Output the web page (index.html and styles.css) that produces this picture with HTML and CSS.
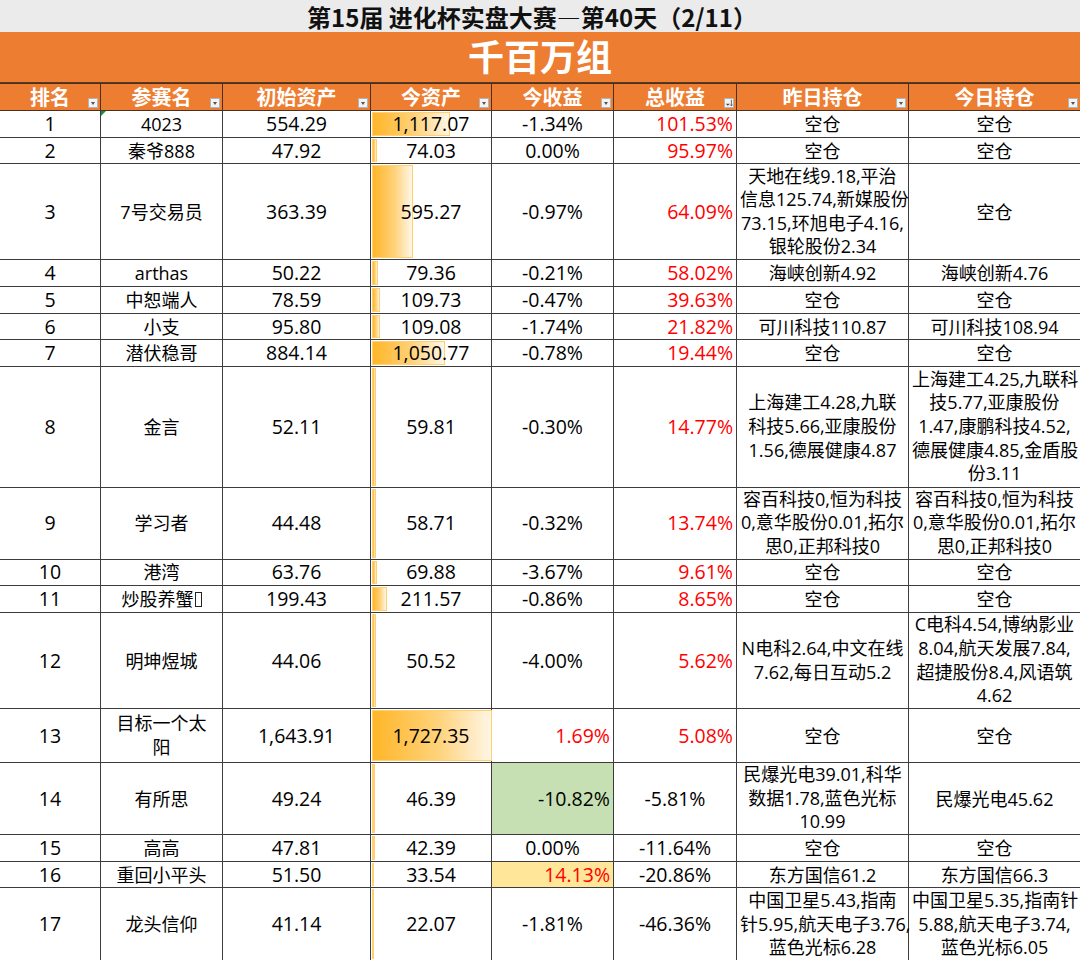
FILE: index.html
```html
<!DOCTYPE html>
<html lang="zh-CN">
<head>
<meta charset="utf-8">
<title>第15届 进化杯实盘大赛</title>
<link rel="stylesheet" href="styles.css">
</head>
<body>
<div class="title">第15届 进化杯实盘大赛—第40天（2/11）</div>
<div class="group">千百万组</div>
<table class="board">
  <colgroup>
    <col class="c-rank"><col class="c-name"><col class="c-init"><col class="c-now"><col class="c-day"><col class="c-total"><col class="c-hold"><col class="c-hold2">
  </colgroup>
  <thead>
    <tr>
      <th>排名<span class="filter"></span></th>
      <th>参赛名<span class="filter"></span></th>
      <th>初始资产<span class="filter"></span></th>
      <th>今资产<span class="filter"></span></th>
      <th>今收益<span class="filter"></span></th>
      <th>总收益<span class="filter sort"><svg viewBox="0 0 10 10" width="8" height="8"><path d="M1 6 L3.5 8.5 L6 6 Z" fill="#444"/><path d="M8 1 V8.5 M6.6 7 L8 8.6 L9.4 7" stroke="#444" stroke-width="1" fill="none"/></svg></span></th>
      <th>昨日持仓<span class="filter"></span></th>
      <th>今日持仓<span class="filter"></span></th>
    </tr>
  </thead>
  <tbody>
    <tr class="one">
      <td>1</td><td class="flag">4023</td><td>554.29</td>
      <td class="asset"><div class="bar" style="width:64.67%"></div><span class="val">1,117.07</span></td>
      <td>-1.34%</td><td class="up">101.53%</td><td>空仓</td><td>空仓</td>
    </tr>
    <tr class="one">
      <td>2</td><td>秦爷888</td><td>47.92</td>
      <td class="asset"><div class="bar" style="width:4.29%"></div><span class="val">74.03</span></td>
      <td>0.00%</td><td class="up">95.97%</td><td>空仓</td><td>空仓</td>
    </tr>
    <tr class="four">
      <td>3</td><td>7号交易员</td><td>363.39</td>
      <td class="asset"><div class="bar" style="width:34.46%"></div><span class="val">595.27</span></td>
      <td>-0.97%</td><td class="up">64.09%</td>
      <td class="hold">天地在线9.18,平治<br>信息125.74,新媒股份<br>73.15,环旭电子4.16,<br>银轮股份2.34</td>
      <td>空仓</td>
    </tr>
    <tr class="one">
      <td>4</td><td>arthas</td><td>50.22</td>
      <td class="asset"><div class="bar" style="width:4.59%"></div><span class="val">79.36</span></td>
      <td>-0.21%</td><td class="up">58.02%</td><td>海峡创新4.92</td><td>海峡创新4.76</td>
    </tr>
    <tr class="one">
      <td>5</td><td>中恕端人</td><td>78.59</td>
      <td class="asset"><div class="bar" style="width:6.35%"></div><span class="val">109.73</span></td>
      <td>-0.47%</td><td class="up">39.63%</td><td>空仓</td><td>空仓</td>
    </tr>
    <tr class="one">
      <td>6</td><td>小支</td><td>95.80</td>
      <td class="asset"><div class="bar" style="width:6.31%"></div><span class="val">109.08</span></td>
      <td>-1.74%</td><td class="up">21.82%</td><td>可川科技110.87</td><td>可川科技108.94</td>
    </tr>
    <tr class="one">
      <td>7</td><td>潜伏稳哥</td><td>884.14</td>
      <td class="asset"><div class="bar" style="width:60.83%"></div><span class="val">1,050.77</span></td>
      <td>-0.78%</td><td class="up">19.44%</td><td>空仓</td><td>空仓</td>
    </tr>
    <tr class="five">
      <td>8</td><td>金言</td><td>52.11</td>
      <td class="asset"><div class="bar" style="width:3.46%"></div><span class="val">59.81</span></td>
      <td>-0.30%</td><td class="up">14.77%</td>
      <td class="hold">上海建工4.28,九联<br>科技5.66,亚康股份<br>1.56,德展健康4.87</td>
      <td class="hold">上海建工4.25,九联科<br>技5.77,亚康股份<br>1.47,康鹏科技4.52,<br>德展健康4.85,金盾股<br>份3.11</td>
    </tr>
    <tr class="three">
      <td>9</td><td>学习者</td><td>44.48</td>
      <td class="asset"><div class="bar" style="width:3.40%"></div><span class="val">58.71</span></td>
      <td>-0.32%</td><td class="up">13.74%</td>
      <td class="hold">容百科技0,恒为科技<br>0,意华股份0.01,拓尔<br>思0,正邦科技0</td>
      <td class="hold">容百科技0,恒为科技<br>0,意华股份0.01,拓尔<br>思0,正邦科技0</td>
    </tr>
    <tr class="one">
      <td>10</td><td>港湾</td><td>63.76</td>
      <td class="asset"><div class="bar" style="width:4.05%"></div><span class="val">69.88</span></td>
      <td>-3.67%</td><td class="up">9.61%</td><td>空仓</td><td>空仓</td>
    </tr>
    <tr class="one">
      <td>11</td><td>炒股养蟹<span class="tofu"></span></td><td>199.43</td>
      <td class="asset"><div class="bar" style="width:12.25%"></div><span class="val">211.57</span></td>
      <td>-0.86%</td><td class="up">8.65%</td><td>空仓</td><td>空仓</td>
    </tr>
    <tr class="four">
      <td>12</td><td>明坤煜城</td><td>44.06</td>
      <td class="asset"><div class="bar" style="width:2.92%"></div><span class="val">50.52</span></td>
      <td>-4.00%</td><td class="up">5.62%</td>
      <td class="hold">N电科2.64,中文在线<br>7.62,每日互动5.2</td>
      <td class="hold">C电科4.54,博纳影业<br>8.04,航天发展7.84,<br>超捷股份8.4,风语筑<br>4.62</td>
    </tr>
    <tr class="two">
      <td>13</td><td class="hold">目标一个太<br>阳</td><td>1,643.91</td>
      <td class="asset"><div class="bar" style="width:100%"></div><span class="val">1,727.35</span></td>
      <td class="up">1.69%</td><td class="up">5.08%</td><td>空仓</td><td>空仓</td>
    </tr>
    <tr class="three">
      <td>14</td><td>有所思</td><td>49.24</td>
      <td class="asset"><div class="bar" style="width:2.69%"></div><span class="val">46.39</span></td>
      <td class="right green">-10.82%</td><td>-5.81%</td>
      <td class="hold">民爆光电39.01,科华<br>数据1.78,蓝色光标<br>10.99</td>
      <td>民爆光电45.62</td>
    </tr>
    <tr class="one">
      <td>15</td><td>高高</td><td>47.81</td>
      <td class="asset"><div class="bar" style="width:2.45%"></div><span class="val">42.39</span></td>
      <td>0.00%</td><td>-11.64%</td><td>空仓</td><td>空仓</td>
    </tr>
    <tr class="one">
      <td>16</td><td>重回小平头</td><td>51.50</td>
      <td class="asset"><div class="bar" style="width:1.94%"></div><span class="val">33.54</span></td>
      <td class="up yellow">14.13%</td><td>-20.86%</td><td>东方国信61.2</td><td>东方国信66.3</td>
    </tr>
    <tr class="three last">
      <td>17</td><td>龙头信仰</td><td>41.14</td>
      <td class="asset"><div class="bar" style="width:1.28%"></div><span class="val">22.07</span></td>
      <td>-1.81%</td><td>-46.36%</td>
      <td class="hold">中国卫星5.43,指南<br>针5.95,航天电子3.76,<br>蓝色光标6.28</td>
      <td class="hold">中国卫星5.35,指南针<br>5.88,航天电子3.74,<br>蓝色光标6.05</td>
    </tr>
  </tbody>
</table>
</body>
</html>
```

FILE: styles.css
```css
* { box-sizing: border-box; }
html, body { margin: 0; padding: 0; background: #fff; }
body {
  width: 1080px;
  height: 960px;
  overflow: hidden;
  font-family: "Open Sans", "Noto Sans CJK SC", sans-serif;
  color: #000;
}
.title {
  height: 32px;
  background: #ebebeb;
  display: flex;
  align-items: center;
  justify-content: center;
  font-family: "Noto Sans CJK SC", sans-serif;
  font-size: 24px;
  font-weight: 700;
  color: #111;
  padding-right: 16px;
}
.group {
  height: 51px;
  background: #ed7d31;
  color: #fff;
  font-family: "Noto Sans CJK SC", sans-serif;
  font-size: 36px;
  font-weight: 700;
  display: flex;
  align-items: center;
  justify-content: center;
  padding-bottom: 5px;
  border-bottom: 1px solid #5a3a20;
}
.board {
  border-collapse: collapse;
  table-layout: fixed;
  width: 1081px;
  margin-left: -1px;
}
.c-rank { width: 101px; }
.c-name { width: 122px; }
.c-init { width: 148px; }
.c-now { width: 121px; }
.c-day { width: 122px; }
.c-total { width: 123px; }
.c-hold { width: 172px; }
.c-hold2 { width: 172px; }

.board th, .board td {
  border: 1px solid #3c3c3c;
  padding: 0 3px;
  font-size: 18px;
  line-height: 24px;
  text-align: center;
  white-space: nowrap;
  vertical-align: middle;
}
.board td:nth-child(1),
.board td:nth-child(3),
.board td:nth-child(4),
.board td:nth-child(5),
.board td:nth-child(6) { font-size: 19.5px; }

.board th {
  position: relative;
  height: 27px;
  background: #ed7d31;
  color: #fff;
  font-family: "Noto Sans CJK SC", sans-serif;
  font-weight: 700;
  font-size: 20px;
  line-height: 24px;
  border-color: #4a3020;
  padding-bottom: 1px;
}
.board td:nth-child(2), .board td:nth-child(3) { border-left-color: #9a9a9a; }

.filter {
  position: absolute;
  right: 2px;
  bottom: 2px;
  width: 10px;
  height: 10px;
  background: #f3f3f3;
  border: 1px solid #b4b4b4;
  display: flex;
  align-items: center;
  justify-content: center;
}
.filter::after {
  content: "";
  border-left: 2.5px solid transparent;
  border-right: 2.5px solid transparent;
  border-top: 3px solid #555;
}
.filter.sort::after { display: none; }
.filter svg { display: block; }

tr.one td { height: 26.7px; }
tr.two td { height: 54px; }
tr.three td { height: 72px; }
tr.four td { height: 96px; }
tr.five td { height: 120.5px; }
tr.last td { height: 73px; }
.board td.hold { line-height: 23.6px; }

.board td.up { color: #ff0000; text-align: right; }
.board td.right { text-align: right; }
.board td.green { background: #c6e0b4; }
.board td.yellow { background: #ffe699; }

.asset { position: relative; }
.bar {
  position: absolute;
  left: 1px;
  top: 1px;
  bottom: 1px;
  min-width: 2px;
  background: linear-gradient(to right, #ffb628 0%, #ffd27a 55%, #fff6e6 100%);
  border: 1px solid #ffcf70;
}
.val { position: relative; }

.flag { position: relative; }
.flag::before {
  content: "";
  position: absolute;
  left: 0;
  top: 0;
  border-top: 5px solid #1e8e3e;
  border-right: 5px solid transparent;
}
.tofu {
  display: inline-block;
  width: 7px;
  height: 15px;
  border: 1px solid #222;
  vertical-align: -1px;
  margin-left: 1px;
}
```
